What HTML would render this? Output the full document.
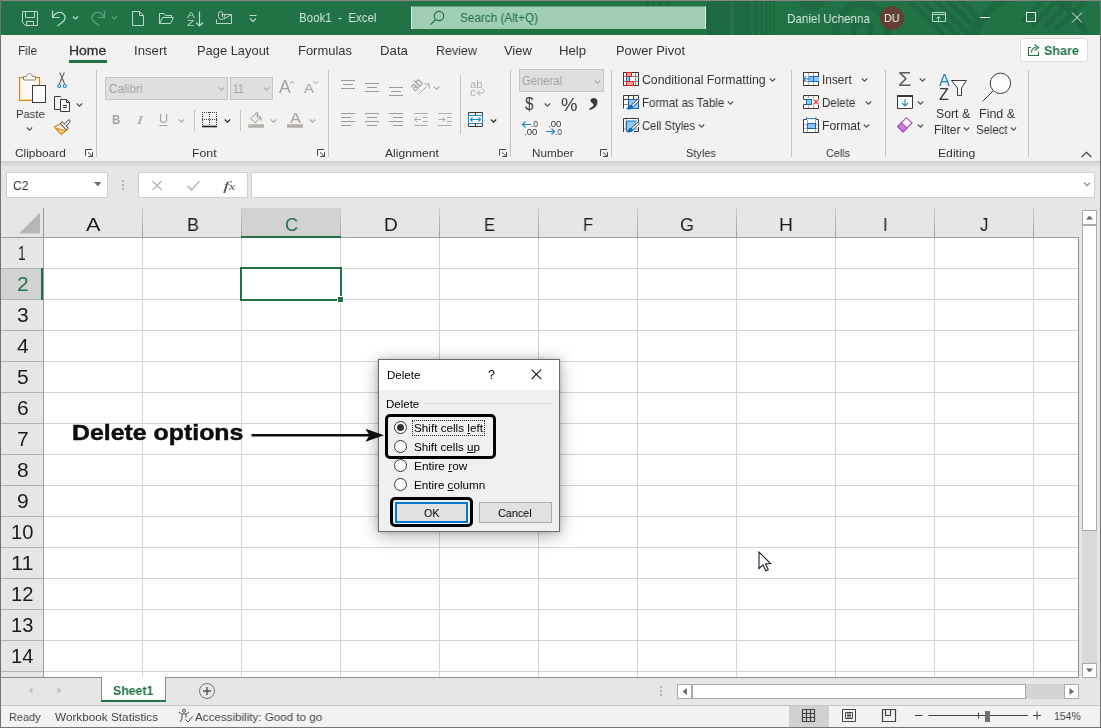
<!DOCTYPE html>
<html><head><meta charset="utf-8"><title>Book1 - Excel</title>
<style>
*{box-sizing:border-box;margin:0;padding:0}
html,body{width:1101px;height:728px;overflow:hidden;background:#e6e6e6}
body{position:relative;font-family:"Liberation Sans",sans-serif;color:#444}
.a{position:absolute}
.t{position:absolute;white-space:nowrap;line-height:1;transform-origin:0 0;color:#363534;will-change:transform}
svg{position:absolute;overflow:visible}
.chv{width:7px;height:4px}
.chv polyline{fill:none;stroke:#55534f;stroke-width:1.15}
.chd polyline{stroke:#262626;stroke-width:1.25}
.chg polyline{stroke:#adaba9}
.vs{position:absolute;width:1px;background:#c6c4c2}
.gl{position:absolute;background:#d4d4d4}
.ic{fill:none;stroke:#55534f;stroke-width:1}
.gi{fill:none;stroke:#a6a4a2;stroke-width:1}
</style></head><body>

<!-- TITLE BAR -->
<div class="a" id="titlebar" style="left:0;top:0;width:1101px;height:35px;background:#217346"></div>
<svg style="left:0;top:0;overflow:hidden" width="1101" height="35" viewBox="0 0 1101 35">
 <g fill="#1f6941">
  <rect x="646" y="0" width="3" height="7"/><rect x="652" y="0" width="3" height="7"/><rect x="658" y="0" width="4" height="7"/><rect x="665" y="0" width="5" height="7"/>
  <rect x="707" y="0" width="23" height="35"/><rect x="734.500" y="0" width="16.500" height="35"/>
  <rect x="754" y="0" width="4" height="35"/><rect x="760" y="0" width="3" height="35"/><rect x="765" y="0" width="2.500" height="35"/><rect x="769.500" y="0" width="2" height="35"/><rect x="773.500" y="0" width="1.500" height="35"/>
  <circle cx="812" cy="-3" r="14"/>
  <polygon points="905,0 912,0 947,35 940,35"/><polygon points="918,0 925,0 960,35 953,35"/><polygon points="931,0 938,0 973,35 966,35"/><polygon points="944,0 951,0 980,29 980,35 979,35"/><polygon points="957,0 964,0 984,20 982,26"/>
  <polygon points="1040,0 1047,0 1024,23 1020,20"/><polygon points="1054,0 1061,0 1034,27 1030,24"/><polygon points="1068,0 1075,0 1046,29 1042,26"/><polygon points="1082,0 1089,0 1058,31 1054,28"/>
 </g>
 <g fill="none" stroke="#1f6941">
 <circle cx="862" cy="30" r="26" stroke-width="8"/><circle cx="862" cy="30" r="9" stroke-width="6"/>
 <circle cx="1030" cy="52" r="58" stroke-width="8"/>
 </g>
</svg>
<div class="a" style="left:0;top:0;width:1101px;height:1px;background:#8b8787"></div>

<svg style="left:0;top:0" width="1101" height="35" viewBox="0 0 1101 35" fill="none" stroke="#b9dac7" stroke-width="1">
 <!-- save -->
 <path d="M22.5,11.5 H37.5 V25.5 H25.5 L22.5,22.5 Z M25.5,11.5 V17.5 H34.5 V11.5 M26.5,25.5 V21.5 H33.5 V25.5"/>
 <!-- undo -->
 <path d="M52.5,10.5 V17.5 H59.5 M52.7,17.3 C55,12.5 60,11 63,13.5 C66.5,16.5 65.5,20 62,22.5 L57.5,26" stroke-width="1.2"/>
 <polyline points="73,16.5 75.5,19 78,16.5" stroke-width="1.2"/>
 <!-- redo -->
 <g opacity=".42"><path d="M104.5,10.5 V17.5 H97.5 M104.3,17.3 C102,12.5 97,11 94,13.5 C90.5,16.5 91.5,20 95,22.5 L99.5,26" stroke-width="1.2"/>
 <polyline points="112,16.5 114.5,19 117,16.5" stroke-width="1.2"/></g>
 <!-- new -->
 <path d="M132.5,11.5 H139.5 L143.5,15.5 V25.5 H132.5 Z M139.5,11.5 V15.5 H143.5"/>
 <!-- open -->
 <path d="M159.5,23.5 V13.5 H164 L165.5,15.5 H171.5 V17.5 M159.5,23.5 L162.5,17.5 H173.5 L170.5,23.5 Z"/>
 <!-- sort arrow -->
 <path d="M199.5,11.5 V26 M196,22.5 L199.5,26 L203,22.5" stroke-width="1.2"/>
 <!-- mail -->
 <path d="M221.5,14.5 H231.5 V23.5 H216.5 V19.5 M224,19 L231.5,14.5"/>
 <path d="M222.5,17 V13.5 A2,2 0 0 0 218.500,13.5 V16.5 A3,3 0 0 0 224.5,16.5 V14" stroke-width="1"/>
 <!-- customize -->
 <path d="M249.500,15.500 H256.500 M250,18.500 L253,21.500 L256,18.500" stroke-width="1.2"/>
</svg>
<span class="t" style="left:187.0px;top:10px;font-size:9.6px;transform:scaleX(1.249);color:#b9dac7;">A</span>
<span class="t" style="left:187.0px;top:18px;font-size:9.6px;transform:scaleX(1.277);color:#b9dac7;">Z</span>


<span class="t" style="left:298.8px;top:11px;font-size:13.2px;transform:scaleX(0.873);color:#d3e6db;">Book1&nbsp; -&nbsp; Excel</span>
<div class="a" style="left:411px;top:6px;width:295px;height:23px;background:#a0ceb5;border-top:1px solid #5f9f7c;border-left:1px solid #d9ece1;border-right:1px solid #d9ece1"></div>
<svg style="left:0;top:0" width="1101" height="35" viewBox="0 0 1101 35" fill="none" stroke="#217346" stroke-width="1.2">
 <circle cx="439" cy="16" r="4.700"/><path d="M435.700,19.500 L430.500,24.700"/>
</svg>
<span class="t" style="left:460.0px;top:11px;font-size:13.2px;transform:scaleX(0.890);color:#1e6e42;">Search (Alt+Q)</span>
<span class="t" style="left:786.5px;top:12px;font-size:13.2px;transform:scaleX(0.884);color:#d3e6db;">Daniel Uchenna</span>
<div class="a" style="left:880px;top:6px;width:24px;height:24px;border-radius:12px;background:#643f33"></div>
<span class="t" style="left:884.1px;top:13px;font-size:11.3px;transform:scaleX(0.949);color:#ffffff;">DU</span>
<svg style="left:0;top:0" width="1101" height="35" viewBox="0 0 1101 35" fill="none" stroke="#e8f1ec" stroke-width="1">
 <path d="M932.500,12.500 H945.500 V21.500 H932.500 Z M932.500,14.500 H945.500 M938.500,21.500 V16.500 M936.500,18.500 L938.500,16.500 L940.500,18.500" stroke="#b9dac7"/>
 <path d="M980,17.500 H990"/>
 <rect x="1026.500" y="12.500" width="9" height="9"/>
 <path d="M1072,12.500 L1082,22.500 M1082,12.500 L1072,22.500"/>
</svg>


<!-- TABS + RIBBON -->
<div class="a" id="ribbon" style="left:0;top:35px;width:1101px;height:126px;background:#f3f2f1"></div>
<div class="a" style="left:0;top:161px;width:1101px;height:6px;background:linear-gradient(#cfcecd,#e6e6e6)"></div>

<span class="t" style="left:17.9px;top:45px;font-size:12.9px;transform:scaleX(0.924);">File</span>
<span class="t" style="left:69.3px;top:45px;font-size:12.9px;transform:scaleX(1.082);color:#333;-webkit-text-stroke:0.3px #333;">Home</span>
<div class="a" style="left:69px;top:60px;width:38px;height:3px;background:#217346"></div>
<span class="t" style="left:133.5px;top:45px;font-size:12.9px;transform:scaleX(1.023);">Insert</span>
<span class="t" style="left:196.5px;top:45px;font-size:12.9px;transform:scaleX(0.995);">Page Layout</span>
<span class="t" style="left:297.5px;top:45px;font-size:12.9px;transform:scaleX(1.005);">Formulas</span>
<span class="t" style="left:379.5px;top:45px;font-size:12.9px;transform:scaleX(1.028);">Data</span>
<span class="t" style="left:435.8px;top:45px;font-size:12.9px;transform:scaleX(0.967);">Review</span>
<span class="t" style="left:503.8px;top:45px;font-size:12.9px;transform:scaleX(0.992);">View</span>
<span class="t" style="left:558.8px;top:45px;font-size:12.9px;transform:scaleX(1.022);">Help</span>
<span class="t" style="left:615.7px;top:45px;font-size:12.9px;transform:scaleX(1.003);">Power Pivot</span>
<div class="a" style="left:1020px;top:38px;width:68px;height:24px;background:#fff;border:1px solid #dddbd9;border-radius:3px"></div>
<svg style="left:0;top:0" width="1101" height="70" viewBox="0 0 1101 70" fill="none" stroke="#217346" stroke-width="1.1">
 <path d="M1031,47.500 H1028.500 V55.500 H1038.500 V51.500 M1031.500,52.500 C1031.500,49 1033.500,47.500 1036.500,47.500 M1034.500,44.500 L1038.500,47.500 L1034.500,50.500"/>
</svg>
<span class="t" style="left:1043.5px;top:45px;font-size:12.9px;transform:scaleX(0.971);color:#217346;font-weight:bold;">Share</span>


<svg style="left:0;top:0" width="1101" height="170" viewBox="0 0 1101 170" fill="none" stroke="#55534f" stroke-width="1">
 <!-- paste -->
 <rect x="19.500" y="77.500" width="20" height="23" fill="#fbf8f4" stroke="#e27d13"/>
 <rect x="20.500" y="78.500" width="18" height="21" stroke="#fbe2ad"/>
 <path d="M23.500,80 V76.500 H26.500 C27,72.500 32,72.500 32.500,76.500 H35.500 V80 Z" fill="#f7f6f5" stroke="#8a8886"/>
 <rect x="32.500" y="85.500" width="13" height="17" fill="#fbfbfb" stroke="#3b3a39"/>
 <!-- scissors -->
 <path d="M59.700,72.500 L64.600,84 M64.300,72.500 L59.400,84" stroke="#605e5c" stroke-width="1.1"/>
 <circle cx="59.200" cy="86" r="1.500" stroke="#1e8bcd" stroke-width="1.2"/><circle cx="64.800" cy="86" r="1.500" stroke="#1e8bcd" stroke-width="1.2"/>
 <!-- copy -->
 <path d="M60,109.500 H54.500 V96.500 H60.500 L61.500,97.500" stroke="#3b3a39"/>
 <path d="M60.500,99.500 H66.500 L69.500,102.500 V111.500 H60.500 Z M66.500,99.500 V102.500 H69.500 M63,105.500 H67 M63,107.500 H67" fill="#fbfbfb" stroke="#3b3a39"/>
 <!-- format painter -->
 <path d="M54.300,127 L60.800,123.800 L66.500,130.200 L61.200,134.500 Z" fill="#fff" stroke="#e27d13" stroke-width="1.100"/>
 <path d="M56.200,128 L65.500,130.700 L61.200,134.200 Z" fill="#fbd77a" stroke="#e27d13"/>
 <path d="M60.400,123.400 L62.300,121.700 L68.300,128.300 L66.400,130 Z" fill="#fff" stroke="#3b3a39"/>
 <path d="M64.400,124.100 L67.800,120.400 A1.300,1.300 0 0 1 69.800,122.100 L66.300,126.100" fill="#fff" stroke="#3b3a39"/>
</svg>
<svg class="chv " style="left:26.2px;top:127.4px" viewBox="0 0 7 4"><polyline points="0.8,0.5 3.5,3.2 6.200,0.5"/></svg><svg class="chv " style="left:76.2px;top:102.5px" viewBox="0 0 7 4"><polyline points="0.8,0.5 3.5,3.2 6.200,0.5"/></svg><svg style="left:85px;top:149px" width="8" height="8" viewBox="0 0 8 8" fill="none" stroke="#4a4846" stroke-width="1"><path d="M0.500,6.700 V0.500 H7 M3,3.300 L7.300,7.300 M7.500,3.200 V7.500 H3.200"/></svg>
<span class="t" style="left:15.8px;top:108px;font-size:11.7px;transform:scaleX(0.960);">Paste</span>
<span class="t" style="left:15.1px;top:147px;font-size:11.7px;transform:scaleX(1.015);">Clipboard</span>
<div class="vs" style="left:96px;top:70px;height:87px"></div>

<div class="a" style="left:105px;top:77px;width:123px;height:23px;background:#e1dfdd;border:1px solid #c8c6c4"></div>
<div class="a" style="left:230px;top:77px;width:43px;height:23px;background:#e1dfdd;border:1px solid #c8c6c4"></div>
<span class="t" style="left:108.5px;top:83px;font-size:12.2px;transform:scaleX(0.975);color:#a5a3a1;">Calibri</span>
<span class="t" style="left:233.4px;top:83px;font-size:12.2px;transform:scaleX(0.861);color:#a5a3a1;">11</span>
<svg class="chv chg" style="left:218px;top:87.3px" viewBox="0 0 7 4"><polyline points="0.8,0.5 3.5,3.2 6.200,0.5"/></svg><svg class="chv chg" style="left:263px;top:87.3px" viewBox="0 0 7 4"><polyline points="0.8,0.5 3.5,3.2 6.200,0.5"/></svg>
<span class="t" style="left:278.5px;top:79px;font-size:17.6px;transform:scaleX(1.013);color:#a5a3a1;">A</span>
<span class="t" style="left:304.1px;top:82px;font-size:13.4px;transform:scaleX(1.108);color:#a5a3a1;">A</span>
<svg style="left:0;top:0" width="1101" height="170" viewBox="0 0 1101 170" fill="none" stroke="#a5a3a1" stroke-width="1">
 <polyline points="290.200,83.600 292.100,81.300 294,83.600"/>
 <polyline points="313.300,81.300 315.600,83.800 317.900,81.300"/>
 <!-- borders icon -->
 <g stroke="#3b3a39"><path d="M202,112.500 H217 M202,119.500 H217" stroke-dasharray="1 1"/><path d="M202.500,112 V126 M209.500,112 V126 M216.500,112 V126" stroke-dasharray="1 1"/>
 <path d="M202,126.500 H217" stroke="#1a1a1a" stroke-width="1.6"/></g>
 <!-- fill -->
 <path d="M250.600,118.700 L255.800,113.500 L260.300,118 L255.100,122.900 Z" fill="#ededec" stroke="#9a9896"/>
 <path d="M255.800,113.800 V113.200 A0.900,0.900 0 0 1 257.600,113.200 V117.600" stroke="#9a9896"/>
 <path d="M259.700,115.600 C261.600,117 262.200,119.500 261.800,121.700 C261,120.200 260.600,119.200 259.700,118.500 Z" fill="#a8a6a4" stroke="none"/>
 <rect x="248.200" y="124.200" width="15.700" height="3.600" fill="#b3b0ad" stroke="none"/>
 <rect x="287" y="124.200" width="16" height="3.600" fill="#b3b0ad" stroke="none"/>
 <path d="M159.300,125.600 H167.500" stroke="#a5a3a1"/>
</svg>
<span class="t" style="left:112.3px;top:113px;font-size:13.0px;transform:scaleX(0.873);color:#a5a3a1;font-weight:bold;">B</span>
<span class="t" style="left:136.3px;top:114px;font-size:12.8px;transform:scaleX(1.805);color:#b2b0ae;font-family:'Liberation Serif',serif;font-style:italic;">I</span>
<span class="t" style="left:158.8px;top:113px;font-size:12.6px;transform:scaleX(1.010);color:#a5a3a1;">U</span>
<svg class="chv chg" style="left:178px;top:118.6px" viewBox="0 0 7 4"><polyline points="0.8,0.5 3.5,3.2 6.200,0.5"/></svg>
<div class="vs" style="left:194px;top:110px;height:21px"></div>
<svg class="chv chd" style="left:224px;top:118.7px" viewBox="0 0 7 4"><polyline points="0.8,0.5 3.5,3.2 6.200,0.5"/></svg>
<div class="vs" style="left:240px;top:110px;height:21px"></div>
<svg class="chv chg" style="left:270px;top:118.5px" viewBox="0 0 7 4"><polyline points="0.8,0.5 3.5,3.2 6.200,0.5"/></svg>
<span class="t" style="left:289.9px;top:111px;font-size:14.2px;transform:scaleX(1.151);color:#a5a3a1;">A</span>
<svg class="chv chg" style="left:309px;top:118.5px" viewBox="0 0 7 4"><polyline points="0.8,0.5 3.5,3.2 6.200,0.5"/></svg>
<span class="t" style="left:191.9px;top:147px;font-size:11.7px;transform:scaleX(1.052);">Font</span>
<svg style="left:317px;top:149px" width="8" height="8" viewBox="0 0 8 8" fill="none" stroke="#4a4846" stroke-width="1"><path d="M0.500,6.700 V0.500 H7 M3,3.300 L7.300,7.300 M7.500,3.200 V7.500 H3.200"/></svg>
<div class="vs" style="left:328px;top:70px;height:87px"></div>

<svg style="left:0;top:0" width="1101" height="170" viewBox="0 0 1101 170" fill="none" stroke="#9d9b99" stroke-width="1">
 <path d="M341,80.5 H355 M343,84.5 H353 M341,88.5 H355 "/>
 <path d="M365,83.5 H379 M367,87.5 H377 M365,91.5 H379 "/>
 <path d="M389,87.5 H403 M391,91.5 H401 M389,95.5 H403 "/>
 <path d="M341,113.5 H355 M341,117.5 H351 M341,121.5 H355 M341,125.5 H351 "/>
 <path d="M365,113.5 H379 M367,117.5 H377 M365,121.5 H379 M367,125.5 H377 "/>
 <path d="M389,113.5 H403 M393,117.5 H403 M389,121.5 H403 M393,125.5 H403 "/>
 <path d="M414,113.500 H428 M414,125.500 H428 M422.500,117.500 H428 M422.500,121.500 H428 M414.500,119.500 H421 M417,117 L414.500,119.500 L417,122" stroke="#b0aeac"/>
 <path d="M438,113.500 H452 M438,125.500 H452 M446.500,117.500 H452 M446.500,121.500 H452 M438.500,119.500 H445 M442.500,117 L445,119.500 L442.500,122" stroke="#b0aeac"/>
 <!-- orientation arrow -->
 <path d="M418.500,94.500 L429,84 M424.500,83.800 H429.200 V88.500" stroke="#b0aeac"/>
 <!-- wrap arrow -->
 <path d="M477.500,93 H482 C485,93 485,88.800 482,88.800 M480,90.500 L477.500,93 L480,95.500" stroke="#b0aeac"/>
 <!-- merge -->
 <path d="M468.500,112.500 H482.500 V126.500 H468.500 Z M468.500,115.500 H482.500 M468.500,123.500 H482.500 M475.500,112.500 V115.500 M475.500,123.500 V126.500" stroke="#3b3a39"/>
 <rect x="468.500" y="115.500" width="14" height="8" fill="#fff" stroke="#1e8bcd"/>
 <path d="M470.500,119.500 H480.500 M472.500,117.500 L470.500,119.500 L472.500,121.500 M478.500,117.500 L480.500,119.500 L478.500,121.500" stroke="#1e8bcd" stroke-width="1.1"/>
</svg>
<span class="t" style="left:415.400px;top:82px;font-size:12px;color:#94928f;transform:rotate(-45deg) scaleX(.92);transform-origin:0 10px;">ab</span>
<span class="t" style="left:470.0px;top:79px;font-size:10.5px;transform:scaleX(1.070);color:#aeacaa;">ab</span>
<span class="t" style="left:470.0px;top:87px;font-size:10.5px;transform:scaleX(1.143);color:#aeacaa;">c</span>
<svg class="chv chg" style="left:433px;top:86.2px" viewBox="0 0 7 4"><polyline points="0.8,0.5 3.5,3.2 6.200,0.5"/></svg>
<div class="vs" style="left:460px;top:75px;height:59px"></div>
<svg class="chv chd" style="left:490px;top:118.6px" viewBox="0 0 7 4"><polyline points="0.8,0.5 3.5,3.2 6.200,0.5"/></svg>
<span class="t" style="left:384.7px;top:147px;font-size:11.7px;transform:scaleX(1.035);">Alignment</span>
<svg style="left:499px;top:149px" width="8" height="8" viewBox="0 0 8 8" fill="none" stroke="#4a4846" stroke-width="1"><path d="M0.500,6.700 V0.500 H7 M3,3.300 L7.300,7.300 M7.500,3.200 V7.500 H3.200"/></svg>
<div class="vs" style="left:510px;top:70px;height:87px"></div>

<div class="a" style="left:519px;top:69px;width:85px;height:23px;background:#e1dfdd;border:1px solid #c8c6c4"></div>
<span class="t" style="left:522.1px;top:75px;font-size:12.2px;transform:scaleX(0.923);color:#a5a3a1;">General</span>
<svg class="chv chg" style="left:594px;top:79.6px" viewBox="0 0 7 4"><polyline points="0.8,0.5 3.5,3.2 6.200,0.5"/></svg>
<span class="t" style="left:525.3px;top:95px;font-size:18.5px;transform:scaleX(0.825);color:#3b3a39;">$</span>
<svg class="chv " style="left:544px;top:102.6px" viewBox="0 0 7 4"><polyline points="0.8,0.5 3.5,3.2 6.200,0.5"/></svg>
<span class="t" style="left:560.9px;top:96px;font-size:18.5px;transform:scaleX(0.979);color:#3b3a39;">%</span>
<span class="t" style="left:588.7px;top:71px;font-size:40.0px;transform:scaleX(0.970);color:#3b3a39;font-weight:bold;font-family:'Liberation Serif',serif;">,</span>
<svg style="left:0;top:0" width="1101" height="170" viewBox="0 0 1101 170" fill="none" stroke="#1e8bcd" stroke-width="1.2">
 <path d="M522.500,124.500 H531 M525.500,121.500 L522.500,124.500 L525.500,127.500"/>
 <path d="M546,131.500 H554.500 M551.500,128.500 L554.500,131.500 L551.500,134.500"/>
</svg>
<span class="t" style="left:530.5px;top:119px;font-size:9.5px;transform:scaleX(0.882);color:#3b3a39;">.0</span>
<span class="t" style="left:524.1px;top:127px;font-size:9.5px;transform:scaleX(1.014);color:#3b3a39;">.00</span>
<span class="t" style="left:548.3px;top:119px;font-size:9.5px;transform:scaleX(1.014);color:#3b3a39;">.00</span>
<span class="t" style="left:554.7px;top:127px;font-size:9.5px;transform:scaleX(0.882);color:#3b3a39;">.0</span>
<span class="t" style="left:532.2px;top:147px;font-size:11.7px;transform:scaleX(0.993);">Number</span>
<svg style="left:600px;top:149px" width="8" height="8" viewBox="0 0 8 8" fill="none" stroke="#4a4846" stroke-width="1"><path d="M0.500,6.700 V0.500 H7 M3,3.300 L7.300,7.300 M7.500,3.200 V7.500 H3.200"/></svg>
<div class="vs" style="left:611px;top:70px;height:87px"></div>

<svg style="left:0;top:0" width="1101" height="170" viewBox="0 0 1101 170" fill="none" stroke="#3b3a39" stroke-width="1">
 <!-- conditional formatting -->
 <rect x="623.500" y="72.500" width="15" height="13" fill="#fff" stroke="#3b3a39"/>
 <path d="M624,76.500 H638 M624,81.500 H638 M635.500,73 V85" stroke="#8a8886"/>
 <rect x="626.500" y="72.500" width="5" height="4" fill="#ff9a9e" stroke="#e0220f"/>
 <rect x="626.500" y="81.500" width="7" height="4" fill="#ff9a9e" stroke="#e0220f"/>
 <rect x="626" y="77" width="4" height="4" fill="#8fc8f8" stroke="none"/><path d="M626.500,77 V81 M629.500,77 V81" stroke="#0f6cbd"/>
 <!-- format as table -->
 <rect x="624" y="96" width="14" height="12.500" fill="#fff" stroke="none"/>
 <path d="M623.500,108.500 V95.500 H638.500 V99.500 H623.500 M628.500,95.500 V99.500 M633.500,95.500 V99.500" stroke="#3b3a39"/>
 <path d="M624,104.500 H628" stroke="#8a8886"/>
 <rect x="628.500" y="99.500" width="10" height="9" fill="#8fc8f8" stroke="#0f6cbd"/>
 <path d="M631.300,105.2 L637.800,99.2 L639.300,100.7 L632.900,106.8 Z" fill="#fff" stroke="#3b3a39" stroke-width=".9"/>
 <path d="M631.200,104.8 C629,104.3 628.500,107 626,108.8 C629,110 632.800,109.5 633.200,106.8 Z" fill="#0f6cbd" stroke="none"/>
 <!-- cell styles -->
 <rect x="624" y="119" width="14" height="12.500" fill="#fff" stroke="none"/>
 <path d="M623.500,132 V118.500 H638.500 V123 M638.500,127 V131.500 H634" stroke="#3b3a39"/>
 <path d="M626,119 V131.500 M624,129 H638" stroke="#8a8886" stroke-width=".8"/>
 <rect x="626.500" y="121" width="10" height="9.500" fill="#8fc8f8" stroke="none"/><path d="M626.500,130.500 V121 H636.500" stroke="#0f6cbd"/>
 <path d="M631.300,128.2 L637.800,122.2 L639.300,123.7 L632.900,129.8 Z" fill="#fff" stroke="#3b3a39" stroke-width=".9"/>
 <path d="M631.200,127.8 C629,127.3 628.500,130 626,131.8 C629,133 632.800,132.5 633.200,129.8 Z" fill="#0f6cbd" stroke="none"/>
 <!-- insert -->
 <rect x="803.500" y="72.500" width="15" height="13" fill="#fff" stroke="#3b3a39"/>
 <path d="M808.500,73 V85 M813.500,73 V85 M804,81.500 H818" stroke="#9a9896" stroke-width=".8"/>
 <rect x="809" y="76.500" width="10" height="5" fill="#8fc8f8" stroke="none"/>
 <path d="M809,76.500 H819 M809,81.500 H819 M813.500,76.500 V81.500" stroke="#0f6cbd"/>
 <path d="M803.500,78.900 H811 M806.200,76.200 L803.500,78.900 L806.200,81.600" stroke="#2b88d8" stroke-width="1.100"/>
 <!-- delete -->
 <rect x="804" y="96" width="14" height="12" fill="#fff" stroke="none"/>
 <path d="M803.500,99 V95.500 H818.500 V99 M803.500,105 V108.500 H818.500 V105" stroke="#3b3a39"/>
 <path d="M808.500,96 V98.500 M813.500,96 V98.500 M808.500,105.500 V108 M813.500,105.500 V108" stroke="#9a9896" stroke-width=".8"/>
 <path d="M803.500,99.500 H806.500 M803.500,104.500 H806.500" stroke="#3b3a39"/>
 <rect x="806.500" y="99.500" width="5" height="5" fill="#8fc8f8" stroke="#0f6cbd"/>
 <path d="M813.500,99.500 L818.500,104.500 M818.500,99.500 L813.500,104.500" stroke="#ee3a3a" stroke-width="1.200"/>
 <!-- format -->
 <rect x="804" y="120" width="14" height="12" fill="#fff" stroke="none"/>
 <path d="M806,119.500 H803.500 V132.500 H818.500 V119.500 H816" stroke="#3b3a39"/>
 <path d="M807.500,120 V132 M815.500,120 V132 M804,124.500 H818 M804,128.500 H818" stroke="#9a9896" stroke-width=".8"/>
 <rect x="807.500" y="123.500" width="8" height="5" fill="#8fc8f8" stroke="#0f6cbd"/>
 <path d="M806.500,118.500 H816 M806.500,117 V120 M816,117 V120" stroke="#2b88d8"/>
</svg>
<span class="t" style="left:642.1px;top:75px;font-size:11.9px;transform:scaleX(1.033);">Conditional Formatting</span><svg class="chv " style="left:769.2px;top:77.6px" viewBox="0 0 7 4"><polyline points="0.8,0.5 3.5,3.2 6.200,0.5"/></svg>
<span class="t" style="left:642.1px;top:98px;font-size:11.9px;transform:scaleX(0.967);">Format as Table</span><svg class="chv " style="left:727px;top:100.5px" viewBox="0 0 7 4"><polyline points="0.8,0.5 3.5,3.2 6.200,0.5"/></svg>
<span class="t" style="left:642.1px;top:121px;font-size:11.9px;transform:scaleX(0.945);">Cell Styles</span><svg class="chv " style="left:698.3px;top:123.9px" viewBox="0 0 7 4"><polyline points="0.8,0.5 3.5,3.2 6.200,0.5"/></svg>
<span class="t" style="left:686.0px;top:147px;font-size:11.7px;transform:scaleX(0.939);">Styles</span>
<div class="vs" style="left:791px;top:70px;height:87px"></div>
<span class="t" style="left:822.1px;top:75px;font-size:11.9px;transform:scaleX(0.985);">Insert</span><svg class="chv " style="left:861.2px;top:77.6px" viewBox="0 0 7 4"><polyline points="0.8,0.5 3.5,3.2 6.200,0.5"/></svg>
<span class="t" style="left:822.1px;top:98px;font-size:11.9px;transform:scaleX(0.969);">Delete</span><svg class="chv " style="left:865.2px;top:100.5px" viewBox="0 0 7 4"><polyline points="0.8,0.5 3.5,3.2 6.200,0.5"/></svg>
<span class="t" style="left:822.1px;top:121px;font-size:11.9px;transform:scaleX(1.019);">Format</span><svg class="chv " style="left:863.2px;top:123.9px" viewBox="0 0 7 4"><polyline points="0.8,0.5 3.5,3.2 6.200,0.5"/></svg>
<span class="t" style="left:826.1px;top:147px;font-size:11.7px;transform:scaleX(0.920);">Cells</span>
<div class="vs" style="left:885px;top:70px;height:87px"></div>

<span class="t" style="left:898.4px;top:69px;font-size:20.0px;transform:scaleX(1.091);color:#5d5b59;">&#931;</span><svg class="chv " style="left:919.2px;top:77.9px" viewBox="0 0 7 4"><polyline points="0.8,0.5 3.5,3.2 6.200,0.5"/></svg>
<svg style="left:0;top:0" width="1101" height="170" viewBox="0 0 1101 170" fill="none" stroke="#3b3a39" stroke-width="1">
 <!-- fill -->
 <path d="M897.500,95.500 H912.500 V108.500 H897.500 Z" fill="#fbfbfb"/><path d="M897,96 H913" stroke-width="2"/>
 <path d="M905,99 V105.500 M902,103 L905,106 L908,103" stroke="#1e8bcd" stroke-width="1.1"/>
 <!-- eraser -->
 <path d="M897.700,126.500 L906.500,117.700 L912,123 L903,132 Z" fill="#fbfbfb" stroke="#b146c2" stroke-width="1.1"/>
 <path d="M897.700,126.500 L901.500,122.700 L907,128.200 L903,132 Z" fill="#c57fd0" stroke="#b146c2" stroke-width="1.1"/>
 <!-- funnel -->
 <path d="M951.500,80.500 H966.500 L961.500,88 V95.500 H957.500 V88 Z" fill="#fbfbfb"/>
 <!-- find -->
 <circle cx="1000.400" cy="83.300" r="10.200" fill="#fbfbfb"/><path d="M993,91 L982.500,101.500"/>
</svg>
<svg class="chv " style="left:917.4px;top:100.7px" viewBox="0 0 7 4"><polyline points="0.8,0.5 3.5,3.2 6.200,0.5"/></svg><svg class="chv " style="left:917.4px;top:123.6px" viewBox="0 0 7 4"><polyline points="0.8,0.5 3.5,3.2 6.200,0.5"/></svg>
<span class="t" style="left:938.6px;top:72px;font-size:16.3px;transform:scaleX(0.984);color:#1e8bcd;">A</span>
<span class="t" style="left:938.6px;top:87px;font-size:15.8px;transform:scaleX(1.025);color:#3b3a39;">Z</span>
<span class="t" style="left:935.8px;top:109px;font-size:11.9px;transform:scaleX(1.032);">Sort &amp;</span>
<span class="t" style="left:934.3px;top:125px;font-size:11.9px;transform:scaleX(0.991);">Filter</span><svg class="chv " style="left:963.4px;top:127.4px" viewBox="0 0 7 4"><polyline points="0.8,0.5 3.5,3.2 6.200,0.5"/></svg>
<span class="t" style="left:979.1px;top:109px;font-size:11.9px;transform:scaleX(1.050);">Find &amp;</span>
<span class="t" style="left:975.8px;top:125px;font-size:11.9px;transform:scaleX(0.953);">Select</span><svg class="chv " style="left:1010.3px;top:127.4px" viewBox="0 0 7 4"><polyline points="0.8,0.5 3.5,3.2 6.200,0.5"/></svg>
<span class="t" style="left:937.7px;top:147px;font-size:11.7px;transform:scaleX(1.041);">Editing</span>
<div class="vs" style="left:1028px;top:70px;height:87px"></div>
<svg style="left:1081px;top:151px" width="11" height="7" viewBox="0 0 11 7" fill="none" stroke="#3b3a39" stroke-width="1.2"><polyline points="0.6,6.2 5.500,1.300 10.400,6.200"/></svg>


<!-- FORMULA BAR -->

<div class="a" style="left:251px;top:172px;width:844px;height:26px;background:#fff;border:1px solid #d0d0d0"></div>
<div class="a" style="left:6px;top:172px;width:102px;height:26px;background:#fff;border:1px solid #d0d0d0"></div>
<span class="t" style="left:12.5px;top:180px;font-size:12.8px;transform:scaleX(0.947);color:#333;">C2</span>
<svg style="left:94px;top:182px" width="8" height="5" viewBox="0 0 8 5"><polygon points="0,0 7.500,0 3.750,4.300" fill="#6e6e6e"/></svg>
<div class="a" style="left:122px;top:180px;width:2px;height:2px;background:#b5b5b5;box-shadow:0 4px 0 #b5b5b5,0 8px 0 #b5b5b5"></div>
<div class="a" style="left:138px;top:172px;width:110px;height:26px;background:#fff;border:1px solid #d0d0d0"></div>
<svg style="left:0;top:0" width="1101" height="200" viewBox="0 0 1101 200" fill="none" stroke="#b4b4b4" stroke-width="1.300">
 <path d="M152.500,181 L161.500,190 M161.500,181 L152.500,190"/>
 <path d="M187.500,186 L191.500,190 L199.500,181" stroke-width="1.800" stroke="#bdbdbd"/>
 <polyline points="1084,182.500 1087,185.800 1090,182.500" stroke="#9a9a9a" stroke-width="1.400"/>
</svg>
<span class="t" style="left:223.0px;top:179px;font-size:13.5px;transform:scaleX(1.726);color:#555;font-family:'Liberation Serif',serif;font-style:italic;">f</span>
<span class="t" style="left:228.8px;top:183px;font-size:9.5px;transform:scaleX(1.470);color:#555;font-family:'Liberation Serif',serif;font-style:italic;">x</span>


<!-- GRID -->
<div class="a" style="left:43px;top:238px;width:1036px;height:439px;background:#fff"></div>
<div class="a" style="left:242px;top:208px;width:98px;height:28px;background:#d2d2d2"></div>
<div class="a" style="left:241px;top:236px;width:100px;height:2px;background:#217346"></div>
<div class="a" style="left:1px;top:269px;width:41px;height:30px;background:#d2d2d2"></div>
<div class="gl" style="left:1px;top:237px;width:1078px;height:1px;background:#9f9f9f"></div>
<div class="gl" style="left:43px;top:208px;width:1px;height:469px;background:#9f9f9f"></div>
<div class="gl" style="left:142px;top:208px;width:1px;height:29px;background:linear-gradient(#d0d0d0,#9c9c9c)"></div>
<div class="gl" style="left:142px;top:238px;width:1px;height:439px"></div>
<div class="gl" style="left:241px;top:208px;width:1px;height:29px;background:linear-gradient(#d0d0d0,#9c9c9c)"></div>
<div class="gl" style="left:241px;top:238px;width:1px;height:439px"></div>
<div class="gl" style="left:340px;top:208px;width:1px;height:29px;background:linear-gradient(#d0d0d0,#9c9c9c)"></div>
<div class="gl" style="left:340px;top:238px;width:1px;height:439px"></div>
<div class="gl" style="left:439px;top:208px;width:1px;height:29px;background:linear-gradient(#d0d0d0,#9c9c9c)"></div>
<div class="gl" style="left:439px;top:238px;width:1px;height:439px"></div>
<div class="gl" style="left:538px;top:208px;width:1px;height:29px;background:linear-gradient(#d0d0d0,#9c9c9c)"></div>
<div class="gl" style="left:538px;top:238px;width:1px;height:439px"></div>
<div class="gl" style="left:637px;top:208px;width:1px;height:29px;background:linear-gradient(#d0d0d0,#9c9c9c)"></div>
<div class="gl" style="left:637px;top:238px;width:1px;height:439px"></div>
<div class="gl" style="left:736px;top:208px;width:1px;height:29px;background:linear-gradient(#d0d0d0,#9c9c9c)"></div>
<div class="gl" style="left:736px;top:238px;width:1px;height:439px"></div>
<div class="gl" style="left:835px;top:208px;width:1px;height:29px;background:linear-gradient(#d0d0d0,#9c9c9c)"></div>
<div class="gl" style="left:835px;top:238px;width:1px;height:439px"></div>
<div class="gl" style="left:934px;top:208px;width:1px;height:29px;background:linear-gradient(#d0d0d0,#9c9c9c)"></div>
<div class="gl" style="left:934px;top:238px;width:1px;height:439px"></div>
<div class="gl" style="left:1033px;top:208px;width:1px;height:29px;background:linear-gradient(#d0d0d0,#9c9c9c)"></div>
<div class="gl" style="left:1033px;top:238px;width:1px;height:439px"></div>
<div class="gl" style="left:44px;top:268px;width:1035px;height:1px"></div>
<div class="gl" style="left:1px;top:268px;width:42px;height:1px;background:#b1b1b1"></div>
<div class="gl" style="left:44px;top:299px;width:1035px;height:1px"></div>
<div class="gl" style="left:1px;top:299px;width:42px;height:1px;background:#b1b1b1"></div>
<div class="gl" style="left:44px;top:330px;width:1035px;height:1px"></div>
<div class="gl" style="left:1px;top:330px;width:42px;height:1px;background:#b1b1b1"></div>
<div class="gl" style="left:44px;top:361px;width:1035px;height:1px"></div>
<div class="gl" style="left:1px;top:361px;width:42px;height:1px;background:#b1b1b1"></div>
<div class="gl" style="left:44px;top:392px;width:1035px;height:1px"></div>
<div class="gl" style="left:1px;top:392px;width:42px;height:1px;background:#b1b1b1"></div>
<div class="gl" style="left:44px;top:423px;width:1035px;height:1px"></div>
<div class="gl" style="left:1px;top:423px;width:42px;height:1px;background:#b1b1b1"></div>
<div class="gl" style="left:44px;top:454px;width:1035px;height:1px"></div>
<div class="gl" style="left:1px;top:454px;width:42px;height:1px;background:#b1b1b1"></div>
<div class="gl" style="left:44px;top:485px;width:1035px;height:1px"></div>
<div class="gl" style="left:1px;top:485px;width:42px;height:1px;background:#b1b1b1"></div>
<div class="gl" style="left:44px;top:516px;width:1035px;height:1px"></div>
<div class="gl" style="left:1px;top:516px;width:42px;height:1px;background:#b1b1b1"></div>
<div class="gl" style="left:44px;top:547px;width:1035px;height:1px"></div>
<div class="gl" style="left:1px;top:547px;width:42px;height:1px;background:#b1b1b1"></div>
<div class="gl" style="left:44px;top:578px;width:1035px;height:1px"></div>
<div class="gl" style="left:1px;top:578px;width:42px;height:1px;background:#b1b1b1"></div>
<div class="gl" style="left:44px;top:609px;width:1035px;height:1px"></div>
<div class="gl" style="left:1px;top:609px;width:42px;height:1px;background:#b1b1b1"></div>
<div class="gl" style="left:44px;top:640px;width:1035px;height:1px"></div>
<div class="gl" style="left:1px;top:640px;width:42px;height:1px;background:#b1b1b1"></div>
<div class="gl" style="left:44px;top:671px;width:1035px;height:1px"></div>
<div class="gl" style="left:1px;top:671px;width:42px;height:1px;background:#b1b1b1"></div>
<div class="a" style="left:241px;top:236px;width:100px;height:2px;background:#217346"></div>
<div class="a" style="left:41px;top:268px;width:2px;height:32px;background:#217346"></div>
<svg style="left:19px;top:212px" width="22" height="22" viewBox="0 0 22 22"><polygon points="21,0.500 21,21.500 0,21.500" fill="#b7b7b7"/></svg>
<span class="t" style="left:86.0px;top:215px;font-size:19.0px;transform:scaleX(1.143);color:#1c1c1c;">A</span>
<span class="t" style="left:186.5px;top:215px;font-size:19.0px;transform:scaleX(0.946);color:#1c1c1c;">B</span>
<span class="t" style="left:284.9px;top:215px;font-size:19.0px;transform:scaleX(0.954);color:#217346;">C</span>
<span class="t" style="left:383.5px;top:215px;font-size:19.0px;transform:scaleX(0.983);color:#1c1c1c;">D</span>
<span class="t" style="left:483.5px;top:215px;font-size:19.0px;transform:scaleX(0.867);color:#1c1c1c;">E</span>
<span class="t" style="left:583.0px;top:215px;font-size:19.0px;transform:scaleX(0.861);color:#1c1c1c;">F</span>
<span class="t" style="left:679.5px;top:215px;font-size:19.0px;transform:scaleX(0.947);color:#1c1c1c;">G</span>
<span class="t" style="left:778.5px;top:215px;font-size:19.0px;transform:scaleX(1.019);color:#1c1c1c;">H</span>
<span class="t" style="left:882.5px;top:215px;font-size:19.0px;transform:scaleX(0.852);color:#1c1c1c;">I</span>
<span class="t" style="left:980.0px;top:215px;font-size:19.0px;transform:scaleX(0.895);color:#1c1c1c;">J</span>
<span class="t" style="left:17.8px;top:244px;font-size:19.5px;transform:scaleX(0.709);color:#1c1c1c;">1</span>
<span class="t" style="left:16.6px;top:275px;font-size:19.5px;transform:scaleX(1.077);color:#217346;">2</span>
<span class="t" style="left:16.6px;top:306px;font-size:19.5px;transform:scaleX(1.077);color:#1c1c1c;">3</span>
<span class="t" style="left:16.6px;top:337px;font-size:19.5px;transform:scaleX(1.077);color:#1c1c1c;">4</span>
<span class="t" style="left:16.6px;top:368px;font-size:19.5px;transform:scaleX(1.077);color:#1c1c1c;">5</span>
<span class="t" style="left:16.6px;top:399px;font-size:19.5px;transform:scaleX(1.077);color:#1c1c1c;">6</span>
<span class="t" style="left:16.6px;top:430px;font-size:19.5px;transform:scaleX(1.077);color:#1c1c1c;">7</span>
<span class="t" style="left:16.6px;top:461px;font-size:19.5px;transform:scaleX(1.077);color:#1c1c1c;">8</span>
<span class="t" style="left:16.6px;top:492px;font-size:19.5px;transform:scaleX(1.077);color:#1c1c1c;">9</span>
<span class="t" style="left:11.3px;top:523px;font-size:19.5px;transform:scaleX(1.032);color:#1c1c1c;">10</span>
<span class="t" style="left:11.3px;top:554px;font-size:19.5px;transform:scaleX(1.106);color:#1c1c1c;">11</span>
<span class="t" style="left:11.3px;top:585px;font-size:19.5px;transform:scaleX(1.032);color:#1c1c1c;">12</span>
<span class="t" style="left:11.3px;top:616px;font-size:19.5px;transform:scaleX(1.032);color:#1c1c1c;">13</span>
<span class="t" style="left:11.3px;top:647px;font-size:19.5px;transform:scaleX(1.032);color:#1c1c1c;">14</span>
<div class="a" style="left:240px;top:267px;width:102px;height:34px;border:2px solid #217346"></div>
<div class="a" style="left:337px;top:296px;width:7px;height:7px;background:#fff"></div>
<div class="a" style="left:338px;top:297px;width:5px;height:5px;background:#217346"></div>
<div class="a" style="left:1078px;top:238px;width:1px;height:440px;background:#8f8f8f"></div>
<div class="a" style="left:1px;top:677px;width:1078px;height:1px;background:#8f8f8f"></div>
<div class="a" style="left:1079px;top:208px;width:21px;height:470px;background:#e6e6e6"></div>
<div class="a" style="left:1082px;top:225px;width:15px;height:439px;background:#d9d9d9"></div>
<div class="a" style="left:1082px;top:210px;width:15px;height:15px;background:#fff;border:1px solid #ababab"></div>
<div class="a" style="left:1082px;top:225px;width:15px;height:306px;background:#fff;border:1px solid #ababab"></div>
<div class="a" style="left:1082px;top:663px;width:15px;height:15px;background:#fff;border:1px solid #ababab"></div>
<svg style="left:1086px;top:215px" width="8" height="5" viewBox="0 0 8 5"><polygon points="0,4.500 7,4.500 3.500,0.500" fill="#6a6a6a"/></svg>
<svg style="left:1086px;top:668px" width="8" height="5" viewBox="0 0 8 5"><polygon points="0,0.500 7,0.500 3.500,4.500" fill="#6a6a6a"/></svg>

<!-- DIALOG -->

<span class="t" style="left:71.9px;top:422px;font-size:21.6px;transform:scaleX(1.152);color:#0d0d0d;font-weight:bold;-webkit-text-stroke:0.45px #0d0d0d;">Delete options</span>
<div class="a" style="left:378px;top:359px;width:182px;height:173px;background:#f0f0f0;border:1px solid #6b6b6b;box-shadow:0 3px 16px rgba(0,0,0,.34),0 0 4px rgba(0,0,0,.16)"></div>
<div class="a" style="left:379px;top:360px;width:180px;height:30px;background:#fff"></div>
<span class="t" style="left:386.9px;top:370px;font-size:11.5px;transform:scaleX(1.005);color:#000;">Delete</span>
<span class="t" style="left:488.0px;top:369px;font-size:12.5px;transform:scaleX(0.935);color:#000;">?</span>
<svg style="left:531px;top:369px" width="11" height="11" viewBox="0 0 11 11"><path d="M0.600,0.600 L10.200,10.200 M10.200,0.600 L0.600,10.200" stroke="#111" stroke-width="1.100" fill="none"/></svg>
<span class="t" style="left:386.2px;top:399px;font-size:11.5px;transform:scaleX(0.992);color:#000;">Delete</span>
<div class="a" style="left:424px;top:403px;width:129px;height:1px;background:#dcdcdc"></div>
<svg style="left:0;top:400px" width="400" height="70" viewBox="0 400 400 70">
 <path d="M251.500,435.300 H372" stroke="#0d0d0d" stroke-width="2.600" fill="none"/>
 <polygon points="384,435.300 365.500,428.800 369.500,435.300 365.500,441.800" fill="#0d0d0d"/>
</svg>
<div class="a" style="left:385px;top:414px;width:111px;height:45px;border:3px solid #000;border-radius:5px"></div>
<div class="a" style="left:412px;top:420px;width:73px;height:16px;border:1px dotted #222"></div>
<div class="a" style="left:394px;top:421px;width:13px;height:13px;border-radius:7px;background:#fff;border:1px solid #333"></div>
<div class="a" style="left:397px;top:424px;width:7px;height:7px;border-radius:3.5px;background:#333"></div>
<span class="t" style="left:414.2px;top:423px;font-size:11.5px;transform:scaleX(1.017);color:#000;">Shift cells <u>l</u>eft</span>
<div class="a" style="left:394px;top:440px;width:13px;height:13px;border-radius:7px;background:#fff;border:1px solid #333"></div>
<span class="t" style="left:414.2px;top:442px;font-size:11.5px;transform:scaleX(1.012);color:#000;">Shift cells <u>u</u>p</span>
<div class="a" style="left:394px;top:459px;width:13px;height:13px;border-radius:7px;background:#fff;border:1px solid #333"></div>
<span class="t" style="left:414.2px;top:461px;font-size:11.5px;transform:scaleX(1.029);color:#000;">Entire <u>r</u>ow</span>
<div class="a" style="left:394px;top:478px;width:13px;height:13px;border-radius:7px;background:#fff;border:1px solid #333"></div>
<span class="t" style="left:414.2px;top:480px;font-size:11.5px;transform:scaleX(1.011);color:#000;">Entire <u>c</u>olumn</span>

<div class="a" style="left:390px;top:497px;width:83px;height:30px;border:3px solid #000;border-radius:5px"></div>
<div class="a" style="left:395px;top:502px;width:73px;height:21px;background:#e1e1e1;border:2px solid #0078d7"></div>
<span class="t" style="left:424.0px;top:508px;font-size:11.5px;transform:scaleX(0.932);color:#000;">OK</span>
<div class="a" style="left:479px;top:502px;width:73px;height:21px;background:#e1e1e1;border:1px solid #adadad"></div>
<span class="t" style="left:498.1px;top:508px;font-size:11.5px;transform:scaleX(0.941);color:#000;">Cancel</span>
<svg style="left:757.5px;top:551px" width="14" height="22" viewBox="0 0 14 22"><path d="M1,1 V17.500 L5,13.800 L7.800,19.800 L10.300,18.700 L7.600,12.900 L12.600,12.600 Z" fill="#fff" stroke="#1b1b2a" stroke-width="1.100" stroke-linejoin="miter"/></svg>


<!-- BOTTOM -->

<div class="a" style="left:1px;top:678px;width:1099px;height:27px;background:#e6e6e6"></div>
<div class="a" style="left:101px;top:677px;width:65px;height:25px;background:#fff;border-left:1px solid #8f8f8f;border-right:1px solid #8f8f8f"></div>
<div class="a" style="left:101px;top:700px;width:65px;height:2px;background:#217346"></div>
<span class="t" style="left:113.0px;top:685px;font-size:12.6px;transform:scaleX(0.980);color:#217346;font-weight:bold;">Sheet1</span>

<div class="a" style="left:660px;top:686px;width:2px;height:2px;background:#b5b5b5;box-shadow:0 4px 0 #b5b5b5,0 8px 0 #b5b5b5"></div>
<div class="a" style="left:677px;top:684px;width:402px;height:15px;background:#d4d4d4"></div>
<div class="a" style="left:677px;top:684px;width:15px;height:15px;background:#fff;border:1px solid #ababab"></div>
<div class="a" style="left:692px;top:684px;width:334px;height:15px;background:#fff;border:1px solid #ababab"></div>
<div class="a" style="left:1064px;top:684px;width:15px;height:15px;background:#fff;border:1px solid #ababab"></div>
<div class="a" style="left:1px;top:705px;width:1099px;height:1px;background:#c8c6c4"></div>
<div class="a" style="left:1px;top:706px;width:1099px;height:21px;background:#f3f2f1"></div>
<div class="a" style="left:789px;top:706px;width:40px;height:21px;background:#d1d1d1"></div>
<span class="t" style="left:9.0px;top:711px;font-size:11.7px;transform:scaleX(0.932);color:#444;">Ready</span>
<span class="t" style="left:55.0px;top:711px;font-size:11.7px;transform:scaleX(1.006);color:#444;">Workbook Statistics</span>
<span class="t" style="left:194.8px;top:711px;font-size:11.7px;transform:scaleX(0.994);color:#444;">Accessibility: Good to go</span>
<span class="t" style="left:1054.3px;top:710px;font-size:11.7px;transform:scaleX(0.899);color:#444;">154%</span>
<svg style="left:0;top:678px" width="1101" height="50" viewBox="0 678 1101 50" fill="none" stroke="#6a6a6a" stroke-width="1">
 <polygon points="32.500,687 32.500,694 28.500,690.500" fill="#c3c3c3" stroke="none"/>
 <polygon points="57.500,687 57.500,694 61.500,690.500" fill="#c3c3c3" stroke="none"/>
 <circle cx="207" cy="691" r="7.500" stroke="#777"/><path d="M203,691 H211 M207,687 V695" stroke="#555" stroke-width="1.400"/>
 <!-- accessibility icon -->
 <g stroke="#444" stroke-width="1"><circle cx="184" cy="710.800" r="1.500"/><path d="M179,712 C180.500,714.800 187.500,714.800 189,712 M182,714.300 V718 C182,719.500 181,720.500 180,722 M186,714.300 V717.500"/><path d="M185.500,719.500 L188,722 L192.500,716.500"/></g>
 <!-- view buttons -->
 <g stroke="#444"><path d="M802.500,709.500 H814.500 V721.500 H802.500 Z M806.500,709.500 V721.500 M810.500,709.500 V721.500 M802.500,713.500 H814.500 M802.500,717.500 H814.500" stroke-width="1.200"/>
 <path d="M842.500,709.500 H855.500 V721.500 H842.500 Z M845.500,712.500 H852.500 V718.500 H845.500 Z M847,714 H851 M847,715.500 H851 M847,717 H851"/>
 <path d="M882.500,709.500 H895.500 V721.500 H882.500 Z M885.500,709.500 V715.500 H890.500 V709.500" stroke-width="1.200"/>
 <path d="M915,715.500 H922.500 M928.500,715.500 H1028 M978.500,712.500 V718.500 M1033,715.500 H1041 M1037,711.500 V719.500"/></g>
 <rect x="985" y="711" width="5" height="11" fill="#737373" stroke="none"/>
 <!-- h scrollbar arrows -->
 <polygon points="687,688 687,695 682.500,691.500" fill="#6a6a6a" stroke="none"/>
 <polygon points="1069.500,688 1069.500,695 1074,691.500" fill="#6a6a6a" stroke="none"/>
</svg>

<!-- window borders -->
<div class="a" style="left:0;top:0;width:1px;height:728px;background:#747272"></div>
<div class="a" style="left:1100px;top:0;width:1px;height:728px;background:#747272"></div>
<div class="a" style="left:0;top:727px;width:1101px;height:1px;background:#747272"></div>
</body></html>
